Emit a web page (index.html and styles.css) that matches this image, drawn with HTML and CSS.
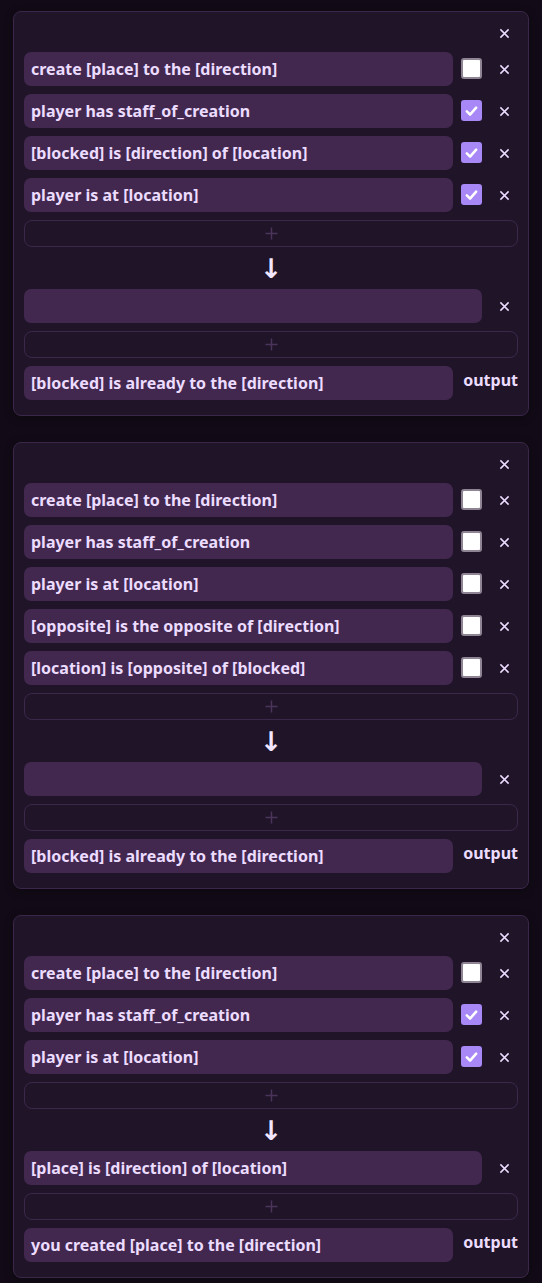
FILE: index.html
```html
<!DOCTYPE html>
<html lang="en">
<head>
<meta charset="utf-8">
<title>Rules</title>
<link rel="stylesheet" href="styles.css">
</head>
<body>
<main class="list">

  <section class="card">
    <div class="card-head"><button class="x-btn" aria-label="remove rule"><svg viewBox="0 0 12 12"><path d="M1.5 1.5L10.5 10.5M10.5 1.5L1.5 10.5"/></svg></button></div>
    <div class="row"><div class="pill">create [place] to the [direction]</div><span class="check"></span><button class="x-btn"><svg viewBox="0 0 12 12"><path d="M1.5 1.5L10.5 10.5M10.5 1.5L1.5 10.5"/></svg></button></div>
    <div class="row"><div class="pill">player has staff_of_creation</div><span class="check on"><svg viewBox="0 0 20 20"><path d="M4.5 10.5L8.3 14.2L15.5 6"/></svg></span><button class="x-btn"><svg viewBox="0 0 12 12"><path d="M1.5 1.5L10.5 10.5M10.5 1.5L1.5 10.5"/></svg></button></div>
    <div class="row"><div class="pill">[blocked] is [direction] of [location]</div><span class="check on"><svg viewBox="0 0 20 20"><path d="M4.5 10.5L8.3 14.2L15.5 6"/></svg></span><button class="x-btn"><svg viewBox="0 0 12 12"><path d="M1.5 1.5L10.5 10.5M10.5 1.5L1.5 10.5"/></svg></button></div>
    <div class="row"><div class="pill">player is at [location]</div><span class="check on"><svg viewBox="0 0 20 20"><path d="M4.5 10.5L8.3 14.2L15.5 6"/></svg></span><button class="x-btn"><svg viewBox="0 0 12 12"><path d="M1.5 1.5L10.5 10.5M10.5 1.5L1.5 10.5"/></svg></button></div>
    <button class="add"><svg viewBox="0 0 14 14"><path d="M7 0.5V13.5M0.5 7H13.5"/></svg></button>
    <div class="arrow">↓</div>
    <div class="row"><div class="pill"></div><button class="x-btn"><svg viewBox="0 0 12 12"><path d="M1.5 1.5L10.5 10.5M10.5 1.5L1.5 10.5"/></svg></button></div>
    <button class="add"><svg viewBox="0 0 14 14"><path d="M7 0.5V13.5M0.5 7H13.5"/></svg></button>
    <div class="row"><div class="pill">[blocked] is already to the [direction]</div><span class="out-label">output</span></div>
  </section>

  <section class="card">
    <div class="card-head"><button class="x-btn" aria-label="remove rule"><svg viewBox="0 0 12 12"><path d="M1.5 1.5L10.5 10.5M10.5 1.5L1.5 10.5"/></svg></button></div>
    <div class="row"><div class="pill">create [place] to the [direction]</div><span class="check"></span><button class="x-btn"><svg viewBox="0 0 12 12"><path d="M1.5 1.5L10.5 10.5M10.5 1.5L1.5 10.5"/></svg></button></div>
    <div class="row"><div class="pill">player has staff_of_creation</div><span class="check"></span><button class="x-btn"><svg viewBox="0 0 12 12"><path d="M1.5 1.5L10.5 10.5M10.5 1.5L1.5 10.5"/></svg></button></div>
    <div class="row"><div class="pill">player is at [location]</div><span class="check"></span><button class="x-btn"><svg viewBox="0 0 12 12"><path d="M1.5 1.5L10.5 10.5M10.5 1.5L1.5 10.5"/></svg></button></div>
    <div class="row"><div class="pill">[opposite] is the opposite of [direction]</div><span class="check"></span><button class="x-btn"><svg viewBox="0 0 12 12"><path d="M1.5 1.5L10.5 10.5M10.5 1.5L1.5 10.5"/></svg></button></div>
    <div class="row"><div class="pill">[location] is [opposite] of [blocked]</div><span class="check"></span><button class="x-btn"><svg viewBox="0 0 12 12"><path d="M1.5 1.5L10.5 10.5M10.5 1.5L1.5 10.5"/></svg></button></div>
    <button class="add"><svg viewBox="0 0 14 14"><path d="M7 0.5V13.5M0.5 7H13.5"/></svg></button>
    <div class="arrow">↓</div>
    <div class="row"><div class="pill"></div><button class="x-btn"><svg viewBox="0 0 12 12"><path d="M1.5 1.5L10.5 10.5M10.5 1.5L1.5 10.5"/></svg></button></div>
    <button class="add"><svg viewBox="0 0 14 14"><path d="M7 0.5V13.5M0.5 7H13.5"/></svg></button>
    <div class="row"><div class="pill">[blocked] is already to the [direction]</div><span class="out-label">output</span></div>
  </section>

  <section class="card">
    <div class="card-head"><button class="x-btn" aria-label="remove rule"><svg viewBox="0 0 12 12"><path d="M1.5 1.5L10.5 10.5M10.5 1.5L1.5 10.5"/></svg></button></div>
    <div class="row"><div class="pill">create [place] to the [direction]</div><span class="check"></span><button class="x-btn"><svg viewBox="0 0 12 12"><path d="M1.5 1.5L10.5 10.5M10.5 1.5L1.5 10.5"/></svg></button></div>
    <div class="row"><div class="pill">player has staff_of_creation</div><span class="check on"><svg viewBox="0 0 20 20"><path d="M4.5 10.5L8.3 14.2L15.5 6"/></svg></span><button class="x-btn"><svg viewBox="0 0 12 12"><path d="M1.5 1.5L10.5 10.5M10.5 1.5L1.5 10.5"/></svg></button></div>
    <div class="row"><div class="pill">player is at [location]</div><span class="check on"><svg viewBox="0 0 20 20"><path d="M4.5 10.5L8.3 14.2L15.5 6"/></svg></span><button class="x-btn"><svg viewBox="0 0 12 12"><path d="M1.5 1.5L10.5 10.5M10.5 1.5L1.5 10.5"/></svg></button></div>
    <button class="add"><svg viewBox="0 0 14 14"><path d="M7 0.5V13.5M0.5 7H13.5"/></svg></button>
    <div class="arrow">↓</div>
    <div class="row"><div class="pill">[place] is [direction] of [location]</div><button class="x-btn"><svg viewBox="0 0 12 12"><path d="M1.5 1.5L10.5 10.5M10.5 1.5L1.5 10.5"/></svg></button></div>
    <button class="add"><svg viewBox="0 0 14 14"><path d="M7 0.5V13.5M0.5 7H13.5"/></svg></button>
    <div class="row"><div class="pill">you created [place] to the [direction]</div><span class="out-label">output</span></div>
  </section>

</main>
</body>
</html>
```

FILE: styles.css
```css
* { box-sizing: border-box; }

html, body {
  margin: 0;
  background: #120b17;
}

body {
  font-family: "Noto Sans", "Open Sans", sans-serif;
  color: #ecdcff;
}

.list {
  display: flex;
  flex-direction: column;
  gap: 26px;
  padding: 11px 13px 6px;
}

.card {
  display: flex;
  flex-direction: column;
  gap: 8px;
  padding: 10px 10px 15px;
  background: #1f1428;
  border: 1px solid #3a2749;
  border-radius: 8px;
  box-shadow: 0 2px 8px rgba(0, 0, 0, 0.35);
}

.card-head {
  display: flex;
  justify-content: flex-end;
  height: 22px;
}

.row {
  display: flex;
  align-items: flex-start;
  gap: 8px;
}

.pill {
  flex: 1;
  min-width: 0;
  height: 34px;
  padding: 0 7px;
  display: flex;
  align-items: center;
  background: #42284f;
  border-radius: 7px;
  font-size: 16px;
  font-weight: 700;
  white-space: nowrap;
  color: #ecdcff;
}

.x-btn {
  width: 28px;
  height: 34px;
  padding: 0;
  margin: 0;
  border: 0;
  background: transparent;
  display: flex;
  align-items: center;
  justify-content: center;
}

.card-head .x-btn {
  height: 22px;
}

.x-btn svg {
  width: 11px;
  height: 11px;
  fill: none;
  stroke: #ecdcff;
  stroke-width: 1.6;
}

.check {
  width: 21px;
  height: 21px;
  margin-top: 6px;
  border-radius: 3px;
  background: #ffffff;
  border: 2px solid #8f8493;
  display: flex;
  align-items: center;
  justify-content: center;
}

.check.on {
  background: #a887f7;
  border-color: #a887f7;
}

.check svg {
  width: 20px;
  height: 20px;
  fill: none;
  stroke: #ffffff;
  stroke-width: 3;
  stroke-linecap: round;
  stroke-linejoin: round;
}

.add {
  height: 27px;
  margin: 0;
  padding: 0;
  border: 1px solid #3c284a;
  border-radius: 8px;
  background: transparent;
  display: flex;
  align-items: center;
  justify-content: center;
}

.add svg {
  width: 13px;
  height: 13px;
  fill: none;
  stroke: #4a3459;
  stroke-width: 1.6;
}

.arrow {
  height: 26px;
  display: flex;
  align-items: center;
  justify-content: center;
  font-family: "DejaVu Sans", sans-serif;
  font-size: 27px;
  font-weight: 700;
  line-height: 1;
  color: #f2e6ff;
}

.out-label {
  width: 57px;
  padding-top: 3px;
  line-height: 22px;
  text-align: right;
  font-size: 16px;
  font-weight: 700;
  color: #ecdcff;
}
```
